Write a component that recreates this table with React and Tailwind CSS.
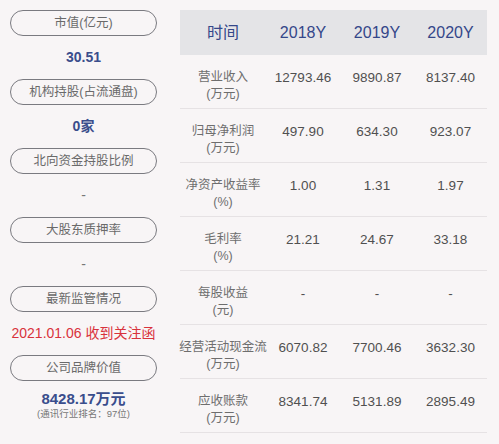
const left = [
  { label: "市值(亿元)", value: "30.51" },
  { label: "机构持股(占流通盘)", value: "0家" },
  { label: "北向资金持股比例", value: "-", dash: true },
  { label: "大股东质押率", value: "-", dash: true },
  { label: "最新监管情况", value: "2021.01.06 收到关注函", red: true },
  { label: "公司品牌价值", value: "8428.17万元", note: "(通讯行业排名：97位)" },
];

const rows = [
  ["营业收入", "(万元)", "12793.46", "9890.87", "8137.40"],
  ["归母净利润", "(万元)", "497.90", "634.30", "923.07"],
  ["净资产收益率", "(%)", "1.00", "1.31", "1.97"],
  ["毛利率", "(%)", "21.21", "24.67", "33.18"],
  ["每股收益", "(元)", "-", "-", "-"],
  ["经营活动现金流", "(万元)", "6070.82", "7700.46", "3632.30"],
  ["应收账款", "(万元)", "8341.74", "5131.89", "2895.49"],
];

function Pill({ children }) {
  return (
    <div className="flex h-[26px] w-[147px] items-center justify-center whitespace-nowrap rounded-full border-[1.5px] border-[#7a7a80] text-[12.5px] text-[#6a6a6a]">
      {children}
    </div>
  );
}

export default function App() {
  return (
    <div
      className="relative h-[444px] w-[499px] overflow-hidden bg-[#f8f5f6]"
      style={{ fontFamily: '"Liberation Sans", "Noto Sans CJK SC", sans-serif' }}
    >
      <div className="flex gap-[23px] pl-[10px] pt-[10px]">
        <div className="flex w-[147px] flex-col">
          {left.map((item, i) => (
            <div key={i} className="flex flex-col items-center">
              <Pill>{item.label}</Pill>
              <div
                className={
                  "flex h-[43px] flex-col items-center justify-center whitespace-nowrap text-[14px] " +
                  (item.red ? "text-[#d8323c]" : item.dash ? "text-[#777]" : "font-semibold text-[#3a4d8c]")
                }
              >
                <span className={item.note ? "mt-[4px] text-[15px] leading-[18px]" : ""}>{item.value}</span>
                {item.note && <span className="text-[9.5px] font-normal leading-[12px] text-[#777]">{item.note}</span>}
              </div>
            </div>
          ))}
        </div>
        <div className="w-[307px]">
          <div className="grid h-[45px] grid-cols-[86px_74px_74px_73px] items-center bg-[#e4e4e7] text-[16px] text-[#34478a]">
            <div className="text-center">时间</div>
            <div className="text-center">2018Y</div>
            <div className="text-center">2019Y</div>
            <div className="text-center">2020Y</div>
          </div>
          {rows.map((r, i) => (
            <div
              key={i}
              className="grid h-[54px] grid-cols-[86px_74px_74px_73px] border-b border-[#e6e2e4] pt-[14px]"
            >
              <div className="flex flex-col items-center whitespace-nowrap text-[12.5px] leading-[17px] text-[#6e6e6e]">
                <span>{r[0]}</span>
                <span>{r[1]}</span>
              </div>
              {r.slice(2).map((v, j) => (
                <div key={j} className="text-center text-[13.5px] leading-[17px] text-[#505050]">
                  {v}
                </div>
              ))}
            </div>
          ))}
        </div>
      </div>
    </div>
  );
}
